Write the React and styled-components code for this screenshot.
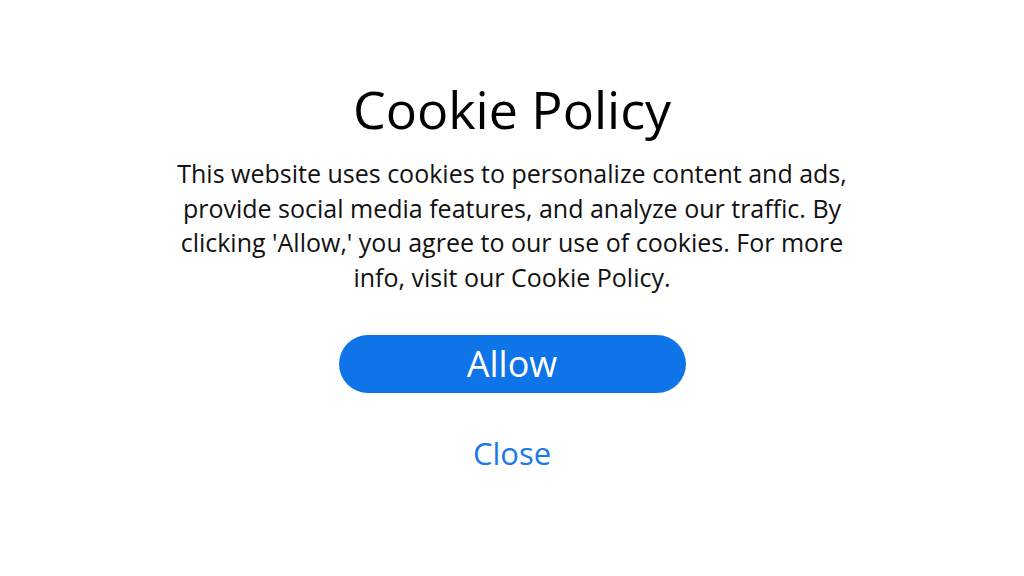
import React from 'react';
import styled, { createGlobalStyle } from 'styled-components';

const GlobalStyle = createGlobalStyle`
  html, body {
    margin: 0;
    padding: 0;
    background: #ffffff;
    font-family: "Open Sans", "Liberation Sans", sans-serif;
  }
`;

const Page = styled.div`
  width: 1024px;
  height: 576px;
  display: flex;
  flex-direction: column;
  align-items: center;
  padding-top: 77px;
  box-sizing: border-box;
`;

const Title = styled.h1`
  margin: 0;
  font-size: 52px;
  font-weight: 400;
  line-height: 64px;
  color: #000000;
`;

const Body = styled.p`
  margin: 15px 0 0;
  width: 690px;
  font-size: 25px;
  line-height: 34.5px;
  text-align: center;
  color: #111111;
`;

const AllowButton = styled.button`
  margin-top: 41px;
  width: 347px;
  height: 58px;
  border: none;
  border-radius: 29px;
  background: #0e74e8;
  color: #ffffff;
  font-family: inherit;
  font-size: 36px;
  font-weight: 400;
  line-height: 58px;
  padding: 0;
  cursor: pointer;
`;

const CloseLink = styled.button`
  margin-top: 40px;
  border: none;
  background: none;
  padding: 0;
  color: #1a7ae6;
  font-family: inherit;
  font-size: 31px;
  line-height: 40px;
  cursor: pointer;
`;

export default function App() {
  return (
    <>
      <GlobalStyle />
      <Page>
        <Title>Cookie Policy</Title>
        <Body>
          This website uses cookies to personalize content and ads, provide social media
          features, and analyze our traffic. By clicking 'Allow,' you agree to our use of
          cookies. For more info, visit our Cookie Policy.
        </Body>
        <AllowButton>Allow</AllowButton>
        <CloseLink>Close</CloseLink>
      </Page>
    </>
  );
}
